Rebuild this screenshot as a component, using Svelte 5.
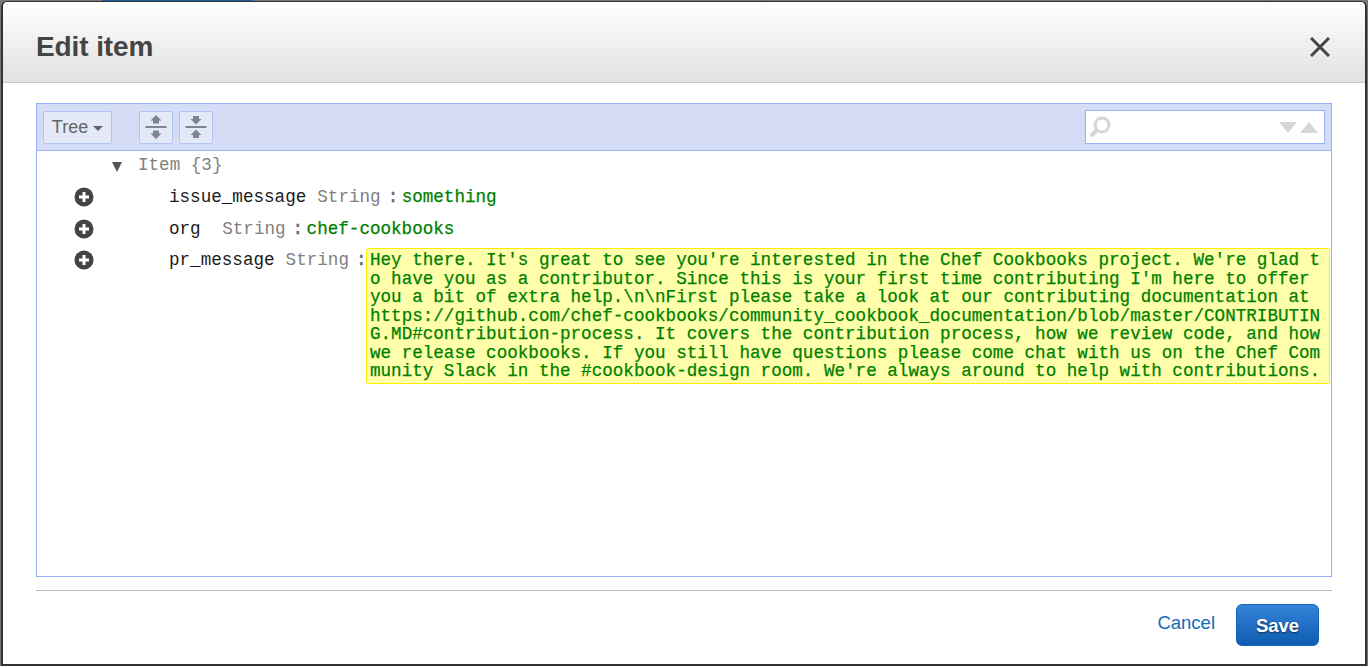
<script>
  const rows = [
    { key: 'issue_message', value: 'something' },
    { key: 'org\u00a0', value: 'chef-cookbooks' }
  ];
  const lines = [
    "Hey there. It's great to see you're interested in the Chef Cookbooks project. We're glad t",
    "o have you as a contributor. Since this is your first time contributing I'm here to offer",
    "you a bit of extra help.\\n\\nFirst please take a look at our contributing documentation at",
    "https://github.com/chef-cookbooks/community_cookbook_documentation/blob/master/CONTRIBUTIN",
    "G.MD#contribution-process. It covers the contribution process, how we review code, and how",
    "we release cookbooks. If you still have questions please come chat with us on the Chef Com",
    "munity Slack in the #cookbook-design room. We're always around to help with contributions."
  ];
</script>

{#snippet plus()}
  <svg class="plus" width="20" height="20" viewBox="0 0 20 20" aria-hidden="true">
    <circle cx="10" cy="10" r="9.500" fill="#444" />
    <path d="M10 5v10M5 10h10" stroke="#fff" stroke-width="3" />
  </svg>
{/snippet}

<div class="backdrop">
  <div class="modal">
    <header class="head">
      <h1>Edit item</h1>
      <svg class="close" width="20" height="20" viewBox="0 0 20 20" aria-hidden="true">
        <path d="M1 1l18 18M19 1L1 19" stroke="#444" stroke-width="3" />
      </svg>
    </header>

    <div class="body">
      <section class="editor">
        <div class="menu">
          <button class="tool tree">Tree <i class="caret"></i></button>
          <button class="tool icon first" aria-label="Expand all">
            <svg width="24" height="26" viewBox="0 0 24 26">
              <path d="M12 1l5.500 5.500H15v3H9v-3H6.500zM12 25l-5.500-5.500H9v-3h6v3h2.500z" fill="#7d8494" />
              <path d="M1.500 13h21" stroke="#7d8494" stroke-width="2" />
            </svg>
          </button>
          <button class="tool icon" aria-label="Collapse all">
            <svg width="24" height="26" viewBox="0 0 24 26">
              <path d="M12 10.500L6.500 5H9V2h6v3h2.500zM12 15.500l5.500 5.500H15v3H9v-3H6.500z" fill="#7d8494" />
              <path d="M1.500 13h21" stroke="#7d8494" stroke-width="2" />
            </svg>
          </button>
          <div class="search">
            <svg width="24" height="26" viewBox="0 0 24 26" aria-hidden="true">
              <circle cx="14" cy="11" r="7" fill="none" stroke="#d6d6d6" stroke-width="3" />
              <path d="M9 16l-6 6" stroke="#d6d6d6" stroke-width="4.500" />
            </svg>
            <span class="arrows">
              <i class="tri down"></i>
              <i class="tri up"></i>
            </span>
          </div>
        </div>

        <div class="tree-view">
          <div class="root"><i class="expander"></i><span class="muted">Item {'{'}3{'}'}</span></div>
          {#each rows as row}
            <div class="row">
              {@render plus()}
              <span class="key">{row.key}</span>
              <span class="muted type">String</span>
              <span class="colon">:</span>
              <span class="value">{row.value}</span>
            </div>
          {/each}
          <div class="row long">
            {@render plus()}
            <span class="key">pr_message</span>
            <span class="muted type">String</span>
            <span class="colon">:</span>
            <div class="highlight">
              {#each lines as line}
                <div>{line}</div>
              {/each}
            </div>
          </div>
        </div>
      </section>

      <hr />

      <footer class="foot">
        <span class="cancel">Cancel</span>
        <button class="save">Save</button>
      </footer>
    </div>
  </div>
</div>

<style>
  :global(body) {
    margin: 0;
    background: #fff;
  }
  .backdrop {
    box-sizing: border-box;
    height: 666px;
    padding: 1px 1px 0;
    background: linear-gradient(90deg, #777 102px, #1f5c99 102px, #1f5c99 253px, #777 253px);
  }
  .modal {
    box-sizing: border-box;
    height: 665px;
    border: 2px solid #333;
    border-top-width: 1px;
    border-radius: 6px 6px 0 0;
    background: #fff;
    overflow: hidden;
    font-family: "Liberation Sans", Arial, sans-serif;
  }
  .head {
    box-sizing: border-box;
    height: 81px;
    padding: 10px 35px 0 33px;
    display: flex;
    align-items: center;
    justify-content: space-between;
    background: linear-gradient(#fff, #e1e1e1);
    border-bottom: 1px solid #c8c8c8;
  }
  h1 {
    margin: 0;
    font-size: 28px;
    font-weight: 700;
    letter-spacing: -0.1px;
    color: #444;
  }
  .body {
    padding: 20px 33px 0;
  }
  .editor {
    box-sizing: border-box;
    height: 474px;
    border: 1px solid #97b0f8;
  }
  .menu {
    box-sizing: border-box;
    height: 47px;
    padding: 6px;
    display: flex;
    align-items: center;
    background: #d5ddf6;
    border-bottom: 1px solid #97b0f8;
  }
  .tool {
    box-sizing: border-box;
    height: 33px;
    padding: 0;
    display: flex;
    align-items: center;
    justify-content: center;
    background: #e3e9f7;
    border: 1px solid #b3c4f7;
    border-radius: 2px;
    color: #666;
    font: 18px "Liberation Sans", Arial, sans-serif;
  }
  .tree {
    width: 69px;
    gap: 5px;
  }
  .icon {
    width: 34px;
    margin-left: 6px;
  }
  .first {
    margin-left: 27px;
  }
  .caret {
    width: 0;
    height: 0;
    margin-top: 2px;
    border-left: 5px solid transparent;
    border-right: 5px solid transparent;
    border-top: 5px solid #666;
  }
  .search {
    box-sizing: border-box;
    width: 240px;
    height: 34px;
    margin-left: auto;
    padding: 0 6px 0 2px;
    display: flex;
    align-items: center;
    justify-content: space-between;
    background: #fff;
    border: 1px solid #97b0f8;
  }
  .arrows {
    display: flex;
    align-items: center;
    gap: 3px;
  }
  .tri {
    width: 0;
    height: 0;
    border-left: 9px solid transparent;
    border-right: 9px solid transparent;
  }
  .down {
    border-top: 11px solid #d6d6d6;
  }
  .up {
    border-bottom: 11px solid #d6d6d6;
  }
  .tree-view {
    font: 17.6px/19px "Liberation Mono", "Courier New", monospace;
    color: #1a1a1a;
  }
  .root {
    height: 19px;
    padding: 5px 0 6px 75px;
    display: flex;
    align-items: center;
  }
  .expander {
    width: 0;
    height: 0;
    margin-right: 16px;
    border-left: 5px solid transparent;
    border-right: 5px solid transparent;
    border-top: 10px solid #555;
    transform: translateY(1px);
  }
  .row {
    height: 32px;
    position: relative;
    padding-left: 132px;
    display: flex;
    align-items: center;
  }
  .plus {
    position: absolute;
    left: 37px;
    top: 6px;
  }
  .long {
    height: auto;
    align-items: flex-start;
  }
  .long .plus {
    top: 5px;
  }
  .long .key,
  .long .type,
  .long .colon {
    padding-top: 6px;
  }
  .muted {
    color: #808080;
  }
  .key {
    margin-right: 11px;
    white-space: pre;
  }
  .colon {
    width: 21px;
    padding-left: 7px;
    box-sizing: border-box;
    color: #666;
    -webkit-text-stroke: 0.4px #666;
  }
  .long .colon {
    width: 17px;
  }
  .value {
    color: #008000;
    -webkit-text-stroke: 0.25px #008000;
  }
  .highlight {
    box-sizing: border-box;
    width: 964px;
    margin-top: 3px;
    padding: 2px 3px;
    background: #ffffab;
    border: 1px solid #ffee00;
    border-radius: 3px;
    color: #008000;
    line-height: 18.5px;
    white-space: pre;
    -webkit-text-stroke: 0.25px #008000;
  }
  hr {
    height: 1px;
    margin: 13px 0 0;
    border: 0;
    background: #bbb;
  }
  .foot {
    padding: 13px 13px 0 0;
    display: flex;
    align-items: center;
    justify-content: flex-end;
    gap: 21px;
  }
  .cancel {
    font-size: 18.500px;
    color: #0f6cb8;
    position: relative;
    top: -2px;
  }
  .save {
    box-sizing: border-box;
    width: 83px;
    height: 42px;
    padding: 2px 0 0;
    background: linear-gradient(#3583d9, #0d5db0);
    border: 1px solid #1566b8;
    border-radius: 6px;
    color: #fff;
    font: 700 18.500px "Liberation Sans", Arial, sans-serif;
    text-shadow: 0 1px 2px rgba(0, 0, 0, 0.6);
  }
</style>
